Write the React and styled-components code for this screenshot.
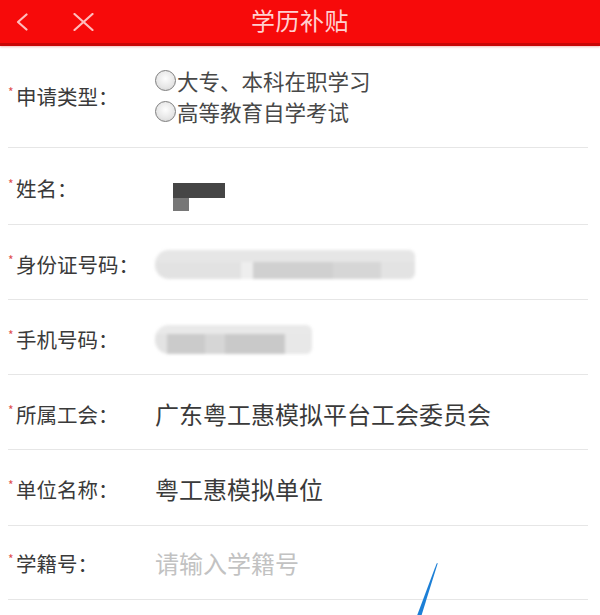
import React from 'react';
import styled, { createGlobalStyle } from 'styled-components';

const GlobalStyle = createGlobalStyle`
  html, body {
    margin: 0;
    padding: 0;
    background: #fff;
  }
  body {
    font-family: "Noto Sans CJK SC", "Noto Sans", sans-serif;
  }
`;

const Page = styled.div`
  position: relative;
  width: 600px;
  height: 615px;
  overflow: hidden;
  background: #fff;
`;

const Header = styled.header`
  display: grid;
  grid-template-columns: 1fr auto 1fr;
  align-items: center;
  height: 43px;
  background: #f70a0a;
  border-bottom: 3px solid #c80606;
  box-shadow: 0 1px 2px rgba(220, 60, 60, 0.35);
`;

const NavGroup = styled.div`
  display: flex;
  align-items: center;
  gap: 45px;
  padding-left: 16px;
  padding-top: 1px;
`;

const NavIcon = styled.svg`
  display: block;
  stroke: #ffbcbc;
  stroke-width: 2.2;
  fill: none;
  stroke-linecap: round;
  stroke-linejoin: round;
`;

const Title = styled.h1`
  margin: 0;
  font-size: 24px;
  font-weight: 400;
  color: #ffd0d0;
  letter-spacing: 0.5px;
  line-height: 1;
  padding-bottom: 3px;
`;

const Form = styled.div`
  display: flex;
  flex-direction: column;
`;

const Row = styled.div`
  display: flex;
  align-items: center;
  height: ${p => p.$height}px;
  margin: 0 12px 0 8px;
  padding-top: ${p => p.$offset || 0}px;
  box-sizing: border-box;
  border-bottom: 1px solid #e6e6e6;
`;

const Label = styled.div`
  position: relative;
  flex: 0 0 147px;
  padding-left: 8px;
  box-sizing: border-box;
  font-size: 20.5px;
  color: #3a3a3a;
  line-height: 1.2;
`;

const Star = styled.span`
  position: absolute;
  left: 0;
  top: 1px;
  font-size: 12px;
  color: #e05050;
`;

const Value = styled.div`
  font-size: 24px;
  color: ${p => (p.$placeholder ? '#c2c2c2' : '#3a3a3a')};
  line-height: 1.2;
  white-space: nowrap;
`;

const RadioList = styled.div`
  display: flex;
  flex-direction: column;
  gap: 9px;
  margin-top: -1px;
`;

const RadioOption = styled.label`
  display: flex;
  align-items: center;
  font-size: 21.5px;
  color: #484848;
  line-height: 22px;
`;

const RadioDot = styled.span`
  flex: 0 0 auto;
  display: inline-block;
  width: 21px;
  height: 21px;
  margin-right: 1px;
  border-radius: 50%;
  border: 1.6px solid #7e7e7e;
  background: radial-gradient(circle at 50% 40%, #fdfdfd 0%, #e6e6e6 60%, #cdcdcd 100%);
  box-sizing: border-box;
`;

const NameMask = styled.div`
  display: flex;
  flex-direction: column;
  margin-left: 18px;
  margin-top: 17px;
`;

const MaskBar = styled.span`
  display: block;
  width: ${p => p.$w}px;
  height: ${p => p.$h}px;
  background: ${p => p.$color};
  filter: blur(0.6px);
`;

const BlurField = styled.div`
  width: ${p => p.$w}px;
  height: 29px;
  border-radius: 14px 6px 6px 14px;
  filter: blur(1.8px);
  background: ${p => p.$bg};
`;

const Stroke = styled.svg`
  position: absolute;
  left: 410px;
  top: 555px;
  pointer-events: none;
`;

const idBg =
  'linear-gradient(180deg, #e6e6e6 0 40%, rgba(230,230,230,0) 40%), ' +
  'linear-gradient(90deg, #e2e2e2 0 86px, #eeeeee 86px 98px, #d0d0d0 98px 178px, #d6d6d6 178px 226px, #e3e3e3 226px)';

const phoneBg =
  'linear-gradient(180deg, #e9e9e9 0 32%, rgba(233,233,233,0) 32%), ' +
  'linear-gradient(90deg, #e3e3e3 0 12px, #cbcbcb 12px 50px, #d6d6d6 50px 70px, #c9c9c9 70px 130px, #e8e8e8 130px)';

const App = () => {
  return (
    <Page>
      <GlobalStyle />
      <Header>
        <NavGroup>
          <NavIcon width="12" height="18" viewBox="0 0 12 18">
            <polyline points="10.5,1.5 2,9 10.5,16.5" />
          </NavIcon>
          <NavIcon width="21" height="18" viewBox="0 0 21 18">
            <line x1="1.5" y1="1" x2="19.5" y2="17" />
            <line x1="19.5" y1="1" x2="1.5" y2="17" />
          </NavIcon>
        </NavGroup>
        <Title>学历补贴</Title>
        <div />
      </Header>

      <Form>
        <Row $height={102}>
          <Label><Star>*</Star>申请类型：</Label>
          <RadioList>
            <RadioOption><RadioDot />大专、本科在职学习</RadioOption>
            <RadioOption><RadioDot />高等教育自学考试</RadioOption>
          </RadioList>
        </Row>

        <Row $height={77} $offset={4}>
          <Label><Star>*</Star>姓名：</Label>
          <NameMask>
            <MaskBar $w={52} $h={15} $color="#454545" />
            <MaskBar $w={16} $h={13} $color="#777" />
          </NameMask>
        </Row>

        <Row $height={75} $offset={4}>
          <Label><Star>*</Star>身份证号码：</Label>
          <BlurField $w={260} $bg={idBg} />
        </Row>

        <Row $height={75} $offset={4}>
          <Label><Star>*</Star>手机号码：</Label>
          <BlurField $w={157} $bg={phoneBg} />
        </Row>

        <Row $height={75} $offset={4}>
          <Label><Star>*</Star>所属工会：</Label>
          <Value>广东粤工惠模拟平台工会委员会</Value>
        </Row>

        <Row $height={76} $offset={4}>
          <Label><Star>*</Star>单位名称：</Label>
          <Value>粤工惠模拟单位</Value>
        </Row>

        <Row $height={74} $offset={2}>
          <Label><Star>*</Star>学籍号：</Label>
          <Value $placeholder>请输入学籍号</Value>
        </Row>
      </Form>

      <Stroke width="40" height="62" viewBox="0 0 40 62">
        <polygon points="27.8,8 26.6,8.5 6.5,62 11,62" fill="#1c7fd6" />
      </Stroke>
    </Page>
  );
};

export default App;
